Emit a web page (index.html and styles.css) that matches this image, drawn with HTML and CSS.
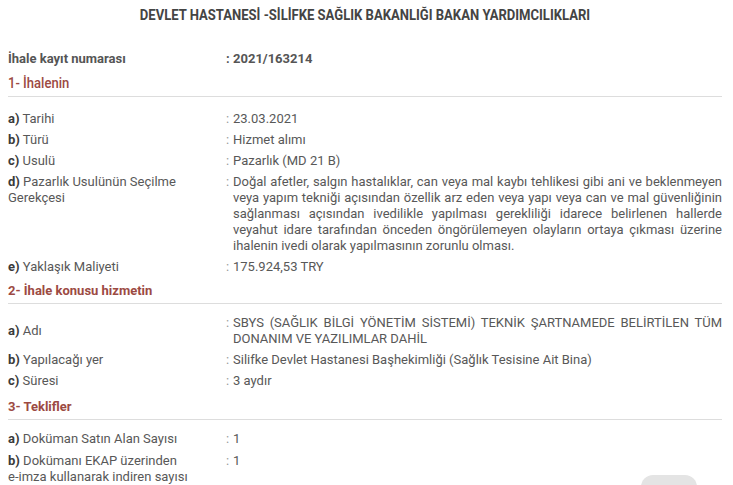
FILE: index.html
```html
<!DOCTYPE html>
<html lang="tr">
<head>
    <meta charset="UTF-8">
    <meta name="viewport" content="width=device-width, initial-scale=1.0">
    <title>İhale Bilgileri</title>
    <link rel="stylesheet" href="styles.css">
</head>
<body>
    <div class="container">
        <h1 class="title">DEVLET HASTANESİ -SİLİFKE SAĞLIK BAKANLIĞI BAKAN YARDIMCILIKLARI</h1>

        <div class="row kayit">
            <div class="label">İhale kayıt numarası</div>
            <div class="value"><span class="colon">:</span><span class="text">2021/163214</span></div>
        </div>

        <h2 class="section condensed"><span>1- İhalenin</span></h2>
        <div class="group first">
            <div class="row">
                <div class="label"><b>a)</b> Tarihi</div>
                <div class="value"><span class="colon">:</span><span class="text">23.03.2021</span></div>
            </div>
            <div class="row">
                <div class="label"><b>b)</b> Türü</div>
                <div class="value"><span class="colon">:</span><span class="text">Hizmet alımı</span></div>
            </div>
            <div class="row">
                <div class="label"><b>c)</b> Usulü</div>
                <div class="value"><span class="colon">:</span><span class="text">Pazarlık (MD 21 B)</span></div>
            </div>
            <div class="row">
                <div class="label"><b>d)</b> Pazarlık Usulünün Seçilme Gerekçesi</div>
                <div class="value"><span class="colon">:</span><span class="text justify">Doğal afetler, salgın hastalıklar, can veya mal kaybı tehlikesi gibi ani ve beklenmeyen veya yapım tekniği açısından özellik arz eden veya yapı veya can ve mal güvenliğinin sağlanması açısından ivedilikle yapılması gerekliliği idarece belirlenen hallerde veyahut idare tarafından önceden öngörülemeyen olayların ortaya çıkması üzerine ihalenin ivedi olarak yapılmasının zorunlu olması.</span></div>
            </div>
            <div class="row">
                <div class="label"><b>e)</b> Yaklaşık Maliyeti</div>
                <div class="value"><span class="colon">:</span><span class="text">175.924,53 TRY</span></div>
            </div>
        </div>

        <h2 class="section">2- İhale konusu hizmetin</h2>
        <div class="group second">
            <div class="row center">
                <div class="label"><b>a)</b> Adı</div>
                <div class="value"><span class="colon">:</span><span class="text justify">SBYS (SAĞLIK BİLGİ YÖNETİM SİSTEMİ) TEKNİK ŞARTNAMEDE BELİRTİLEN TÜM DONANIM VE YAZILIMLAR DAHİL</span></div>
            </div>
            <div class="row">
                <div class="label"><b>b)</b> Yapılacağı yer</div>
                <div class="value"><span class="colon">:</span><span class="text">Silifke Devlet Hastanesi Başhekimliği (Sağlık Tesisine Ait Bina)</span></div>
            </div>
            <div class="row">
                <div class="label"><b>c)</b> Süresi</div>
                <div class="value"><span class="colon">:</span><span class="text">3 aydır</span></div>
            </div>
        </div>

        <h2 class="section">3- Teklifler</h2>
        <div class="group third">
            <div class="row">
                <div class="label"><b>a)</b> Doküman Satın Alan Sayısı</div>
                <div class="value"><span class="colon">:</span><span class="text">1</span></div>
            </div>
            <div class="row">
                <div class="label"><b>b)</b> Dokümanı EKAP üzerinden<br>e-imza kullanarak indiren sayısı</div>
                <div class="value"><span class="colon">:</span><span class="text">1</span></div>
            </div>
        </div>
    </div>

    <div class="to-top"></div>
</body>
</html>
```

FILE: styles.css
```css
body {
    margin: 0;
    font-family: Roboto, "Liberation Sans", Arial, sans-serif;
    font-size: 13px;
    color: #585858;
    background: #fff;
    overflow: hidden;
}
.container {
    padding: 0 11px 0 8px;
}
.title {
    margin: 0;
    padding: 7px 0 0 0;
    height: 34px;
    text-align: center;
    font-size: 14.5px;
    font-weight: 700;
    color: #444;
    transform: scaleX(0.9);
}
.row {
    display: grid;
    grid-template-columns: 218px 1fr;
    padding: 2.5px 0;
    line-height: 16px;
}
.row .label {
    padding-right: 22px;
}
.row.center {
    align-items: center;
}
.kayit {
    margin-top: 7px;
    margin-bottom: 4px;
    font-weight: 700;
    color: #555;
}
.label b {
    color: #3a3a3a;
}
.value {
    display: flex;
}
.colon {
    width: 7px;
    flex: none;
    color: #9a9a9a;
}
.kayit .colon {
    color: #555;
}
.text {
    flex: 1;
}
.justify {
    text-align: justify;
}
.section {
    margin: 0;
    padding: 3px 0 4px;
    font-size: 13px;
    font-weight: 700;
    color: #9c4a43;
    border-bottom: 1px solid #ddd;
    line-height: 16px;
    height: 16px;
}
.section.condensed span {
    display: inline-block;
    font-size: 14.5px;
    font-weight: 500;
    line-height: 16px;
    transform: scaleX(0.9);
    transform-origin: left center;
}
.group {
    padding: 10.5px 0 3.5px;
}
.group.first {
    padding-top: 11px;
    padding-bottom: 2.5px;
}
.group.second {
    padding-top: 8.5px;
    padding-bottom: 5px;
}
.group.third {
    padding-top: 7.5px;
}
.group.third .row {
    padding: 3px 0;
}
.to-top {
    position: fixed;
    left: 641px;
    top: 475px;
    width: 56px;
    height: 30px;
    border-radius: 12px;
    background: #e4e4e4;
}
```
